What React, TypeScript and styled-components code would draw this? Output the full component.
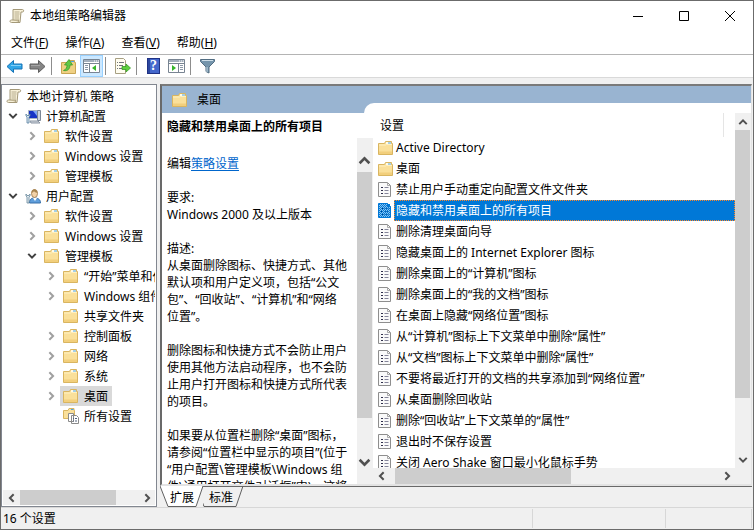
import React from "react";
import styled, { createGlobalStyle, css } from "styled-components";

const GlobalStyle = createGlobalStyle`
  * { box-sizing: border-box; }
  body {
    margin: 0;
    font: 12px/17px "Noto Sans", "Noto Sans CJK SC", sans-serif;
    color: #000;
    background: #f0f0f0;
  }
  button { font: inherit; color: inherit; border: 0; padding: 0; background: none; }
  svg { display: block; flex: none; }
`;

/* ---------- window frame ---------- */

const Window = styled.div`
  display: flex;
  flex-direction: column;
  height: 100vh;
  min-height: 360px;
  border: 1px solid #6b6b6b;
  background: #f0f0f0;
`;

const TitleBar = styled.header`
  display: flex;
  align-items: center;
  gap: 5px;
  height: 29px;
  padding-left: 8px;
  background: #fff;
`;

const Title = styled.h1`
  flex: 1;
  margin: 0;
  font-size: 12px;
  font-weight: 400;
`;

const CaptionButtons = styled.div`
  display: flex;
`;

const CaptionButton = styled.button`
  display: flex;
  align-items: center;
  justify-content: center;
  width: 46px;
  height: 29px;
`;

const MenuBar = styled.nav`
  display: flex;
  gap: 17px;
  height: 25px;
  padding: 0 10px;
  background: #fff;
  border-bottom: 1px solid #b4b4b4;
`;

const Toolbar = styled.div`
  display: flex;
  align-items: center;
  height: 23px;
  padding-left: 2px;
  background: #fff;
  border-bottom: 1px solid #d9d9d9;
`;

const ToolButton = styled.button<{ $on?: boolean }>`
  display: flex;
  align-items: center;
  justify-content: center;
  width: 23px;
  height: 22px;
  ${(p) =>
    p.$on &&
    css`
      background: #cce8ff;
      border: 1px solid #99d1ff;
    `}
`;

const ToolDivider = styled.span`
  width: 1px;
  height: 18px;
  margin: 0 5px 0 2px;
  background: #8d8d8d;
`;

const Panes = styled.main`
  flex: 1;
  display: flex;
  gap: 3px;
  min-height: 0;
  padding: 6px 1px 0 0;
`;

/* ---------- scroll bars ---------- */

const Bar = styled.div<{ $vertical?: boolean; $inset: number }>`
  flex: ${(p) => (p.$vertical ? "none" : "1")};
  display: flex;
  flex-direction: ${(p) => (p.$vertical ? "column" : "row")};
  ${(p) => (p.$vertical ? `width: 16px; padding: ${p.$inset}px 1px ${p.$inset}px 0;` : "")}
  background: #f0f0f0;
`;

const BarButton = styled.button<{ $length: number; $vertical?: boolean }>`
  flex: none;
  display: flex;
  align-items: center;
  justify-content: center;
  ${(p) => (p.$vertical ? `height: ${p.$length}px;` : `width: ${p.$length}px;`)}
`;

const Thumb = styled.div<{ $share: number }>`
  flex: ${(p) => p.$share} 0 0;
  background: #cdcdcd;
`;

const Track = styled.div<{ $share: number }>`
  flex: ${(p) => p.$share} 0 0;
`;

const BarRow = styled.div<{ $corner?: boolean }>`
  flex: none;
  display: flex;
  height: ${(p) => (p.$corner ? 16 : 15)}px;
  padding-right: ${(p) => (p.$corner ? 16 : 0)}px;
  background: #f0f0f0;
`;

const angles = {
  up: "M1.5 8.5 6 4 10.5 8.5",
  down: "M1.5 3.5 6 8 10.5 3.5",
  left: "M8 1.5 3.5 6 8 10.5",
  right: "M4 1.5 8.5 6 4 10.5",
};

function Angle({ to, size = 10, color = "#505050" }: { to: keyof typeof angles; size?: number; color?: string }) {
  return (
    <svg width={size} height={size} viewBox="0 0 12 12" fill="none" stroke={color} strokeWidth="2.4">
      <path d={angles[to]} />
    </svg>
  );
}

type ScrollProps = {
  vertical?: boolean;
  before?: number;
  thumb: number;
  rest: number;
  button?: number;
  arrow?: number;
  inset?: number;
};

function ScrollBar({ vertical, before = 0, thumb, rest, button = 17, arrow = 10, inset = 0 }: ScrollProps) {
  return (
    <Bar $vertical={vertical} $inset={inset}>
      <BarButton $length={button} $vertical={vertical} aria-label={vertical ? "向上" : "向左"}>
        <Angle to={vertical ? "up" : "left"} size={arrow} />
      </BarButton>
      <Track $share={before} />
      <Thumb $share={thumb} />
      <Track $share={rest} />
      <BarButton $length={button} $vertical={vertical} aria-label={vertical ? "向下" : "向右"}>
        <Angle to={vertical ? "down" : "right"} size={arrow} />
      </BarButton>
    </Bar>
  );
}

/* ---------- icons ---------- */

const Folder = () => (
  <svg width="15" height="14" viewBox="0 0 15 14">
    <path d="M.5 2.5H6.500l1-2h6v2h1v11H.5z" fill="#fae09a" stroke="#d9b560" />
    <path d="M8 1h5v2H8z" fill="#fffbe8" />
    <path d="M10 1.500h3v1h-3z" fill="#4ba3e3" />
    <path d="M1 4h6.500l1-.5H14" stroke="#fff0c0" fill="none" />
    <path d="M1 10.500h13V13H1z" fill="#f2cf7c" />
  </svg>
);

const Scroll = () => (
  <svg width="16" height="16" viewBox="0 0 16 16">
    <path d="M4 1.5h9.5c1.5 0 1.5 2.5 0 2.5H12l-1 10.5H2.500c-2 0-2-2.500 0-2.500H4z" fill="#f7f0d8" stroke="#a39878" />
    <path d="M4 12h6c-1 .8-1 2 .8 2.500" fill="#d9cda8" stroke="#a39878" />
    <path d="M5.500 4h5M5.500 6h5M5.500 8h4.500M5.500 10h4.500" stroke="#b5ab8c" />
  </svg>
);

const Computer = () => (
  <svg width="16" height="15" viewBox="0 0 16 15">
    <path d="M3.500 1.500h9v8h-9z" fill="#1733c5" stroke="#a9b4c4" />
    <path d="M8 2h4v5z" fill="#7fa6f5" />
    <path d="M12.500 1.500h3v10h-3z" fill="#cfd5dd" stroke="#7b8796" />
    <path d="M5 12h8l2 2H6z" fill="#d3d8df" stroke="#8994a3" />
    <path d="M1 5v2l1 1v6h2V8l1-1V5L4 6.500H2z" fill="#dce8f1" stroke="#557f9e" strokeWidth=".8" />
  </svg>
);

const User = () => (
  <svg width="16" height="15" viewBox="0 0 16 15">
    <path d="M4.500 14c0-4 2-5 5-5s6 1 6 5z" fill="#5f9edb" stroke="#376fa8" />
    <path d="M8 9l2 3 2-3z" fill="#fff" />
    <ellipse cx="9.500" cy="4.500" rx="3" ry="4" fill="#f3d2a8" stroke="#9a7445" strokeWidth=".8" />
    <path d="M6.500 4c0-5 6-5 6 0-2-.5-3-1-3.500-2C8.500 3 7.500 3.500 6.500 4z" fill="#a78450" />
    <path d="M1 5v2l1 1v6h2V8l1-1V5L4 6.500H2z" fill="#e3ebf0" stroke="#66869b" strokeWidth=".8" />
  </svg>
);

const AllSettings = () => (
  <svg width="16" height="16" viewBox="0 0 16 16">
    <path d="M.5 2.500H5l1-2h5v2h.5v8H.5z" fill="#fae09a" stroke="#d9b560" />
    <path d="M8 1h2.500v1H8z" fill="#4ba3e3" />
    <path d="M5.500 5.500h5v8h-5zM8.500 7.500h5l2 2v6h-7z" fill="#fff" stroke="#8a8a8a" />
    <path d="M10 10.500h1M12 10.500h2M10 13h1M12 13h2" stroke="#54627a" />
  </svg>
);

const Policy = ({ selected }: { selected?: boolean }) => (
  <svg width="13" height="15" viewBox="0 0 13 15">
    <path d="M.5.5h9l3 3v11H.5z" fill={selected ? "#8cc4ee" : "#fafafa"} stroke={selected ? "#0078d7" : "#8e8e8e"} />
    <path d="M9.500.5v3h3" fill="none" stroke={selected ? "#0078d7" : "#a8a8a8"} />
    <path d="M3 5.500h2M3 8.500h2M3 11.500h2" stroke={selected ? "#003f80" : "#31314d"} />
    <path d="M6.500 5.500h4M6.500 8.500h4M6.500 11.500h4" stroke={selected ? "#1b67ac" : "#85859a"} />
    {selected && (
      <>
        <path d="M1 1.500h11M1 3.500h11M1 5.500h11M1 7.500h11M1 9.500h11M1 11.500h11M1 13.500h11" stroke="#0078d7" strokeDasharray="1 1" />
        <path d="M2 2.500h10M2 4.500h10M2 6.500h10M2 8.500h10M2 10.500h10M2 12.500h10" stroke="#0078d7" strokeDasharray="1 1" />
      </>
    )}
  </svg>
);

const Arrow = ({ forward }: { forward?: boolean }) => (
  <svg width="17" height="15" viewBox="0 0 17 15">
    <path
      d={forward ? "M16 7.500 9.500 1.500v3.500H1v5h8.500v3.500z" : "M1 7.500 7.500 1.500v3.500H16v5H7.500v3.500z"}
      fill={forward ? "#858585" : "#2fa6e8"}
      stroke={forward ? "#5e5e5e" : "#1672b5"}
    />
    <path d={forward ? "M2 6.500h9" : "M5 6.500h10"} stroke={forward ? "#a5a5a5" : "#81d0f8"} />
  </svg>
);

const UpFolder = () => (
  <svg width="15" height="15" viewBox="0 0 15 15">
    <path d="M.5 3.500H7l1-2h5.500v2h1v11H.5z" fill="#efd083" stroke="#c9a654" />
    <path d="M10 2h3v1h-3z" fill="#4ba3e3" />
    <path d="M2.500 11.500c3-1 3.500-3.500 3.500-5.500H3.500L8 .5 11.500 6H9c0 3.500-2 6.500-6.500 5.500z" fill="#61c746" stroke="#3b9b2a" strokeWidth=".8" />
  </svg>
);

const PaneIcon = ({ right }: { right?: boolean }) => (
  <svg width="17" height="14" viewBox="0 0 17 14">
    <path d="M.5.5h16v13H.5z" fill="#fff" stroke="#788492" />
    <path d="M1 1h15v2H1z" fill="#a3afbd" />
    <path d="M11 2h1M13 2h1M15 2h1" stroke="#fff" />
    <path d="M1 4.500h15" stroke="#788492" />
    <path d={right ? "M10.500 5v8" : "M6.500 5v8"} stroke="#788492" />
    <path d={right ? "M12 6.500h3M12 8.500h3M12 10.500h3" : "M2 6.500h3M2 8.500h3M2 10.500h3"} stroke="#8b98a8" />
    <path d={right ? "M4 6v6l4-3z" : "M13 6v6L9 9z"} fill="#35b52b" />
  </svg>
);

const Export = () => (
  <svg width="17" height="16" viewBox="0 0 17 16">
    <path d="M1.500.5h8l2 2v13h-10z" fill="#fffdf0" stroke="#a79f82" />
    <path d="M3 4.500h1M5 4.500h5M3 7.500h1M5 7.500h4M3 10.500h1M5 10.500h4" stroke="#71747a" />
    <path d="M8 8.500h4V6l4.500 4-4.500 4v-2.500H8z" fill="#5ed03d" stroke="#389b27" strokeWidth=".8" />
  </svg>
);

const HelpMark = styled.span`
  width: 13px;
  height: 16px;
  border: 1px solid #1f3285;
  background: linear-gradient(90deg, #2c479f 2px, #4468cc 2px);
  color: #fff;
  font: bold 14px/14px "Liberation Serif", serif;
  text-align: center;
`;

const Filter = () => (
  <svg width="15" height="15" viewBox="0 0 15 15">
    <path d="M.5.5h14v2L9 8v6l-3-1.500V8L.5 2.500z" fill="#7595ac" stroke="#526d82" />
    <path d="M2 1.500h11" stroke="#cfdfe9" />
    <path d="M7 8v5" stroke="#c4d7e3" />
  </svg>
);

/* ---------- tree ---------- */

const TreePane = styled.aside`
  flex: none;
  display: flex;
  flex-direction: column;
  width: 156px;
  padding: 1px;
  border: 1px solid #828790;
  background: #fff;
`;

const TreeList = styled.ul`
  flex: 1;
  min-height: 0;
  overflow: hidden;
  margin: 0;
  padding: 0;
  list-style: none;
`;

const TreeRow = styled.li<{ $level: number }>`
  display: flex;
  align-items: center;
  height: 20px;
  padding-left: ${(p) => (p.$level ? p.$level * 19 - 16 : 0)}px;
  white-space: nowrap;
`;

const Expander = styled.button`
  flex: none;
  display: flex;
  justify-content: center;
  width: 16px;
  padding-right: 2px;
`;

const TreeItem = styled.button<{ $selected?: boolean }>`
  display: flex;
  align-items: center;
  gap: 5px;
  height: 20px;
  padding: 0 4px 0 3px;
  background: ${(p) => (p.$selected ? "#d9d9d9" : "none")};
`;

const IconSlot = styled.span`
  display: flex;
  width: 16px;
`;

type Node = { level: number; text: string; icon: React.FC; state?: "open" | "closed"; selected?: boolean };

const nodes: Node[] = [
  { level: 0, text: "本地计算机 策略", icon: Scroll },
  { level: 1, text: "计算机配置", icon: Computer, state: "open" },
  { level: 2, text: "软件设置", icon: Folder, state: "closed" },
  { level: 2, text: "Windows 设置", icon: Folder, state: "closed" },
  { level: 2, text: "管理模板", icon: Folder, state: "closed" },
  { level: 1, text: "用户配置", icon: User, state: "open" },
  { level: 2, text: "软件设置", icon: Folder, state: "closed" },
  { level: 2, text: "Windows 设置", icon: Folder, state: "closed" },
  { level: 2, text: "管理模板", icon: Folder, state: "open" },
  { level: 3, text: "“开始”菜单和任务栏", icon: Folder, state: "closed" },
  { level: 3, text: "Windows 组件", icon: Folder, state: "closed" },
  { level: 3, text: "共享文件夹", icon: Folder },
  { level: 3, text: "控制面板", icon: Folder, state: "closed" },
  { level: 3, text: "网络", icon: Folder, state: "closed" },
  { level: 3, text: "系统", icon: Folder, state: "closed" },
  { level: 3, text: "桌面", icon: Folder, state: "closed", selected: true },
  { level: 3, text: "所有设置", icon: AllSettings },
];

function Tree() {
  return (
    <TreePane>
      <TreeList>
        {nodes.map(({ level, text, icon: Icon, state, selected }, i) => (
          <TreeRow key={i} $level={level}>
            {level > 0 && (
              <Expander as={state ? "button" : "span"} aria-label={state && (state === "open" ? "折叠" : "展开")}>
                {state && <Angle to={state === "open" ? "down" : "right"} color={state === "open" ? "#404040" : "#a0a0a0"} />}
              </Expander>
            )}
            <TreeItem $selected={selected}>
              <IconSlot><Icon /></IconSlot>
              {text}
            </TreeItem>
          </TreeRow>
        ))}
      </TreeList>
      <BarRow>
        <ScrollBar thumb={95} rest={22} />
      </BarRow>
    </TreePane>
  );
}

/* ---------- result pane ---------- */

const ResultColumn = styled.section`
  flex: 1;
  min-width: 0;
  display: flex;
  flex-direction: column;
`;

const ResultFrame = styled.div`
  flex: 1;
  min-height: 0;
  display: flex;
  flex-direction: column;
  border: 2px solid #696969;
  border-top-color: #7a7a7a;
  border-right: 1px solid #e3e3e3;
  border-bottom: 2px solid #e3e3e3;
  background: #fff;
`;

const ResultHeader = styled.div`
  display: flex;
  align-items: flex-end;
  height: 27px;
  background: #99b4d1;
`;

const ResultTitle = styled.h2`
  flex: none;
  display: flex;
  align-items: center;
  gap: 10px;
  width: 202px;
  height: 27px;
  margin: 0;
  padding-left: 10px;
  font-size: 12px;
  font-weight: 400;
`;

const Shoulder = styled.div`
  flex: 1;
  height: 10px;
  border-top-left-radius: 10px;
  background: #fff;
`;

const ResultBody = styled.div`
  flex: 1;
  min-height: 0;
  display: flex;
`;

const Detail = styled.article`
  flex: none;
  display: flex;
  flex-direction: column;
  width: 211px;
`;

const DetailTitle = styled.h3`
  height: 25px;
  margin: 0;
  padding: 5px 5px 0;
  font-size: 12px;
  font-weight: 700;
`;

const DetailBody = styled.div`
  flex: 1;
  min-height: 0;
  display: flex;
`;

const DetailText = styled.div`
  flex: 1;
  overflow: hidden;
  padding: 17px 8px 0 5px;
  white-space: nowrap;
`;

const Paragraph = styled.p`
  margin: 0 0 17px;
  white-space: pre;
`;

const Link = styled.a`
  color: #0066cc;
  text-decoration: underline;
  text-underline-offset: 2px;
`;

const ListArea = styled.div`
  flex: 1;
  min-width: 0;
  display: flex;
  flex-direction: column;
`;

const ListTop = styled.div`
  flex: 1;
  min-height: 0;
  display: flex;
`;

const ListClip = styled.div`
  flex: 1;
  min-width: 0;
  overflow: hidden;
`;

const Table = styled.table`
  width: 100%;
  border-collapse: collapse;
`;

const HeadCell = styled.th`
  height: 24px;
  padding: 0 0 0 7px;
  font-weight: 400;
  text-align: left;
`;

const HeadLabel = styled.div`
  height: 24px;
  margin-right: 11px;
  padding-top: 4px;
  border-right: 1px solid #e5e5e5;
`;

const IconCell = styled.td`
  width: 21px;
  height: 21px;
  padding: 0 0 0 5px;
`;

const NameCell = styled.td<{ $selected?: boolean }>`
  height: 21px;
  padding: 0 2px;
  white-space: nowrap;
  ${(p) =>
    p.$selected &&
    css`
      background: #0078d7;
      color: #fff;
      outline: 1px dotted #ff8728;
      outline-offset: -1px;
    `}
`;

const settings = [
  "Active Directory",
  "桌面",
  "禁止用户手动重定向配置文件文件夹",
  "隐藏和禁用桌面上的所有项目",
  "删除清理桌面向导",
  "隐藏桌面上的 Internet Explorer 图标",
  "删除桌面上的“计算机”图标",
  "删除桌面上的“我的文档”图标",
  "在桌面上隐藏“网络位置”图标",
  "从“计算机”图标上下文菜单中删除“属性”",
  "从“文档”图标上下文菜单中删除“属性”",
  "不要将最近打开的文档的共享添加到“网络位置”",
  "从桌面删除回收站",
  "删除“回收站”上下文菜单的“属性”",
  "退出时不保存设置",
  "关闭 Aero Shake 窗口最小化鼠标手势",
];

const description = [
  "描述:\n从桌面删除图标、快捷方式、其他\n默认项和用户定义项，包括“公文\n包”、“回收站”、“计算机”和“网络\n位置”。",
  "删除图标和快捷方式不会防止用户\n使用其他方法启动程序，也不会防\n止用户打开图标和快捷方式所代表\n的项目。",
  "如果要从位置栏删除“桌面”图标，\n请参阅“位置栏中显示的项目”(位于\n“用户配置\\管理模板\\Windows 组\n件\\通用打开文件对话框”中)。这将",
];

const TabStrip = styled.div`
  display: flex;
  height: 21px;
  border-top: 1px solid #696969;
`;

const Tab = styled.button<{ $first?: boolean }>`
  position: relative;
  width: ${(p) => (p.$first ? 43 : 36)}px;
  height: 20px;
  padding-left: ${(p) => (p.$first ? 1 : 0)}px;
`;

const TabShape = styled.svg`
  position: absolute;
  top: -1px;
  left: 0;
`;

const TabLabel = styled.span`
  position: relative;
`;

/* ---------- status bar ---------- */

const StatusBar = styled.footer`
  display: flex;
  height: 22px;
  padding: 1px 1px 1px 0;
  border-top: 1px solid #d7d7d7;
`;

const StatusCell = styled.div<{ $width?: number }>`
  ${(p) => (p.$width ? `width: ${p.$width}px;` : "flex: 1;")}
  padding: 1px 2px;
  border-right: 1px solid #d7d7d7;
`;

const menus = [["文件", "F"], ["操作", "A"], ["查看", "V"], ["帮助", "H"]];

export default function App() {
  return (
    <>
      <GlobalStyle />
      <Window>
        <TitleBar>
          <Scroll />
          <Title>本地组策略编辑器</Title>
          <CaptionButtons>
            <CaptionButton aria-label="最小化">
              <svg width="10" height="10"><path d="M0 5.500h10" stroke="#000" /></svg>
            </CaptionButton>
            <CaptionButton aria-label="最大化">
              <svg width="10" height="10"><path d="M.5.5h9v9h-9z" fill="none" stroke="#000" /></svg>
            </CaptionButton>
            <CaptionButton aria-label="关闭">
              <svg width="10" height="10"><path d="M0 0l10 10M10 0 0 10" stroke="#000" /></svg>
            </CaptionButton>
          </CaptionButtons>
        </TitleBar>
        <MenuBar>
          {menus.map(([text, key]) => (
            <button key={key}>{text}(<u>{key}</u>)</button>
          ))}
        </MenuBar>
        <Toolbar>
          <ToolButton aria-label="后退"><Arrow /></ToolButton>
          <ToolButton aria-label="前进"><Arrow forward /></ToolButton>
          <ToolDivider />
          <ToolButton aria-label="上一级"><UpFolder /></ToolButton>
          <ToolButton $on aria-label="显示/隐藏控制台树"><PaneIcon /></ToolButton>
          <ToolDivider />
          <ToolButton aria-label="导出列表"><Export /></ToolButton>
          <ToolDivider />
          <ToolButton aria-label="帮助"><HelpMark>?</HelpMark></ToolButton>
          <ToolButton aria-label="显示/隐藏操作窗格"><PaneIcon right /></ToolButton>
          <ToolDivider />
          <ToolButton aria-label="筛选器"><Filter /></ToolButton>
        </Toolbar>
        <Panes>
          <Tree />
          <ResultColumn>
            <ResultFrame>
              <ResultHeader>
                <ResultTitle><Folder />桌面</ResultTitle>
                <Shoulder />
              </ResultHeader>
              <ResultBody>
                <Detail>
                  <DetailTitle>隐藏和禁用桌面上的所有项目</DetailTitle>
                  <DetailBody>
                    <DetailText>
                      <Paragraph>编辑<Link href="#setting">策略设置</Link></Paragraph>
                      <Paragraph>{"要求:\nWindows 2000 及以上版本"}</Paragraph>
                      {description.map((text) => <Paragraph key={text}>{text}</Paragraph>)}
                    </DetailText>
                    <ScrollBar vertical thumb={246} rest={32} button={24} arrow={13} inset={10} />
                  </DetailBody>
                </Detail>
                <ListArea>
                  <ListTop>
                    <ListClip>
                      <Table>
                        <thead>
                          <tr><HeadCell colSpan={2}><HeadLabel>设置</HeadLabel></HeadCell></tr>
                        </thead>
                        <tbody>
                          {settings.map((name, i) => (
                            <tr key={name}>
                              <IconCell>{i < 2 ? <Folder /> : <Policy selected={i === 3} />}</IconCell>
                              <NameCell $selected={i === 3}>{name}</NameCell>
                            </tr>
                          ))}
                        </tbody>
                      </Table>
                    </ListClip>
                    <ScrollBar vertical thumb={267} rest={53} />
                  </ListTop>
                  <BarRow $corner>
                    <ScrollBar before={5} thumb={175} rest={147} />
                  </BarRow>
                </ListArea>
              </ResultBody>
            </ResultFrame>
            <TabStrip>
              <Tab $first>
                <TabShape width="43" height="21">
                  <path d="M0 0 8 20.500H36L43 0" fill="#fff" stroke="#606060" />
                </TabShape>
                <TabLabel>扩展</TabLabel>
              </Tab>
              <Tab>
                <TabShape width="48" height="21">
                  <path d="M-3 10 1 20.500H33L40 0" fill="none" stroke="#606060" />
                </TabShape>
                <TabLabel>标准</TabLabel>
              </Tab>
            </TabStrip>
          </ResultColumn>
        </Panes>
        <StatusBar>
          <StatusCell>16 个设置</StatusCell>
          <StatusCell $width={133} />
          <StatusCell $width={86} />
        </StatusBar>
      </Window>
    </>
  );
}
